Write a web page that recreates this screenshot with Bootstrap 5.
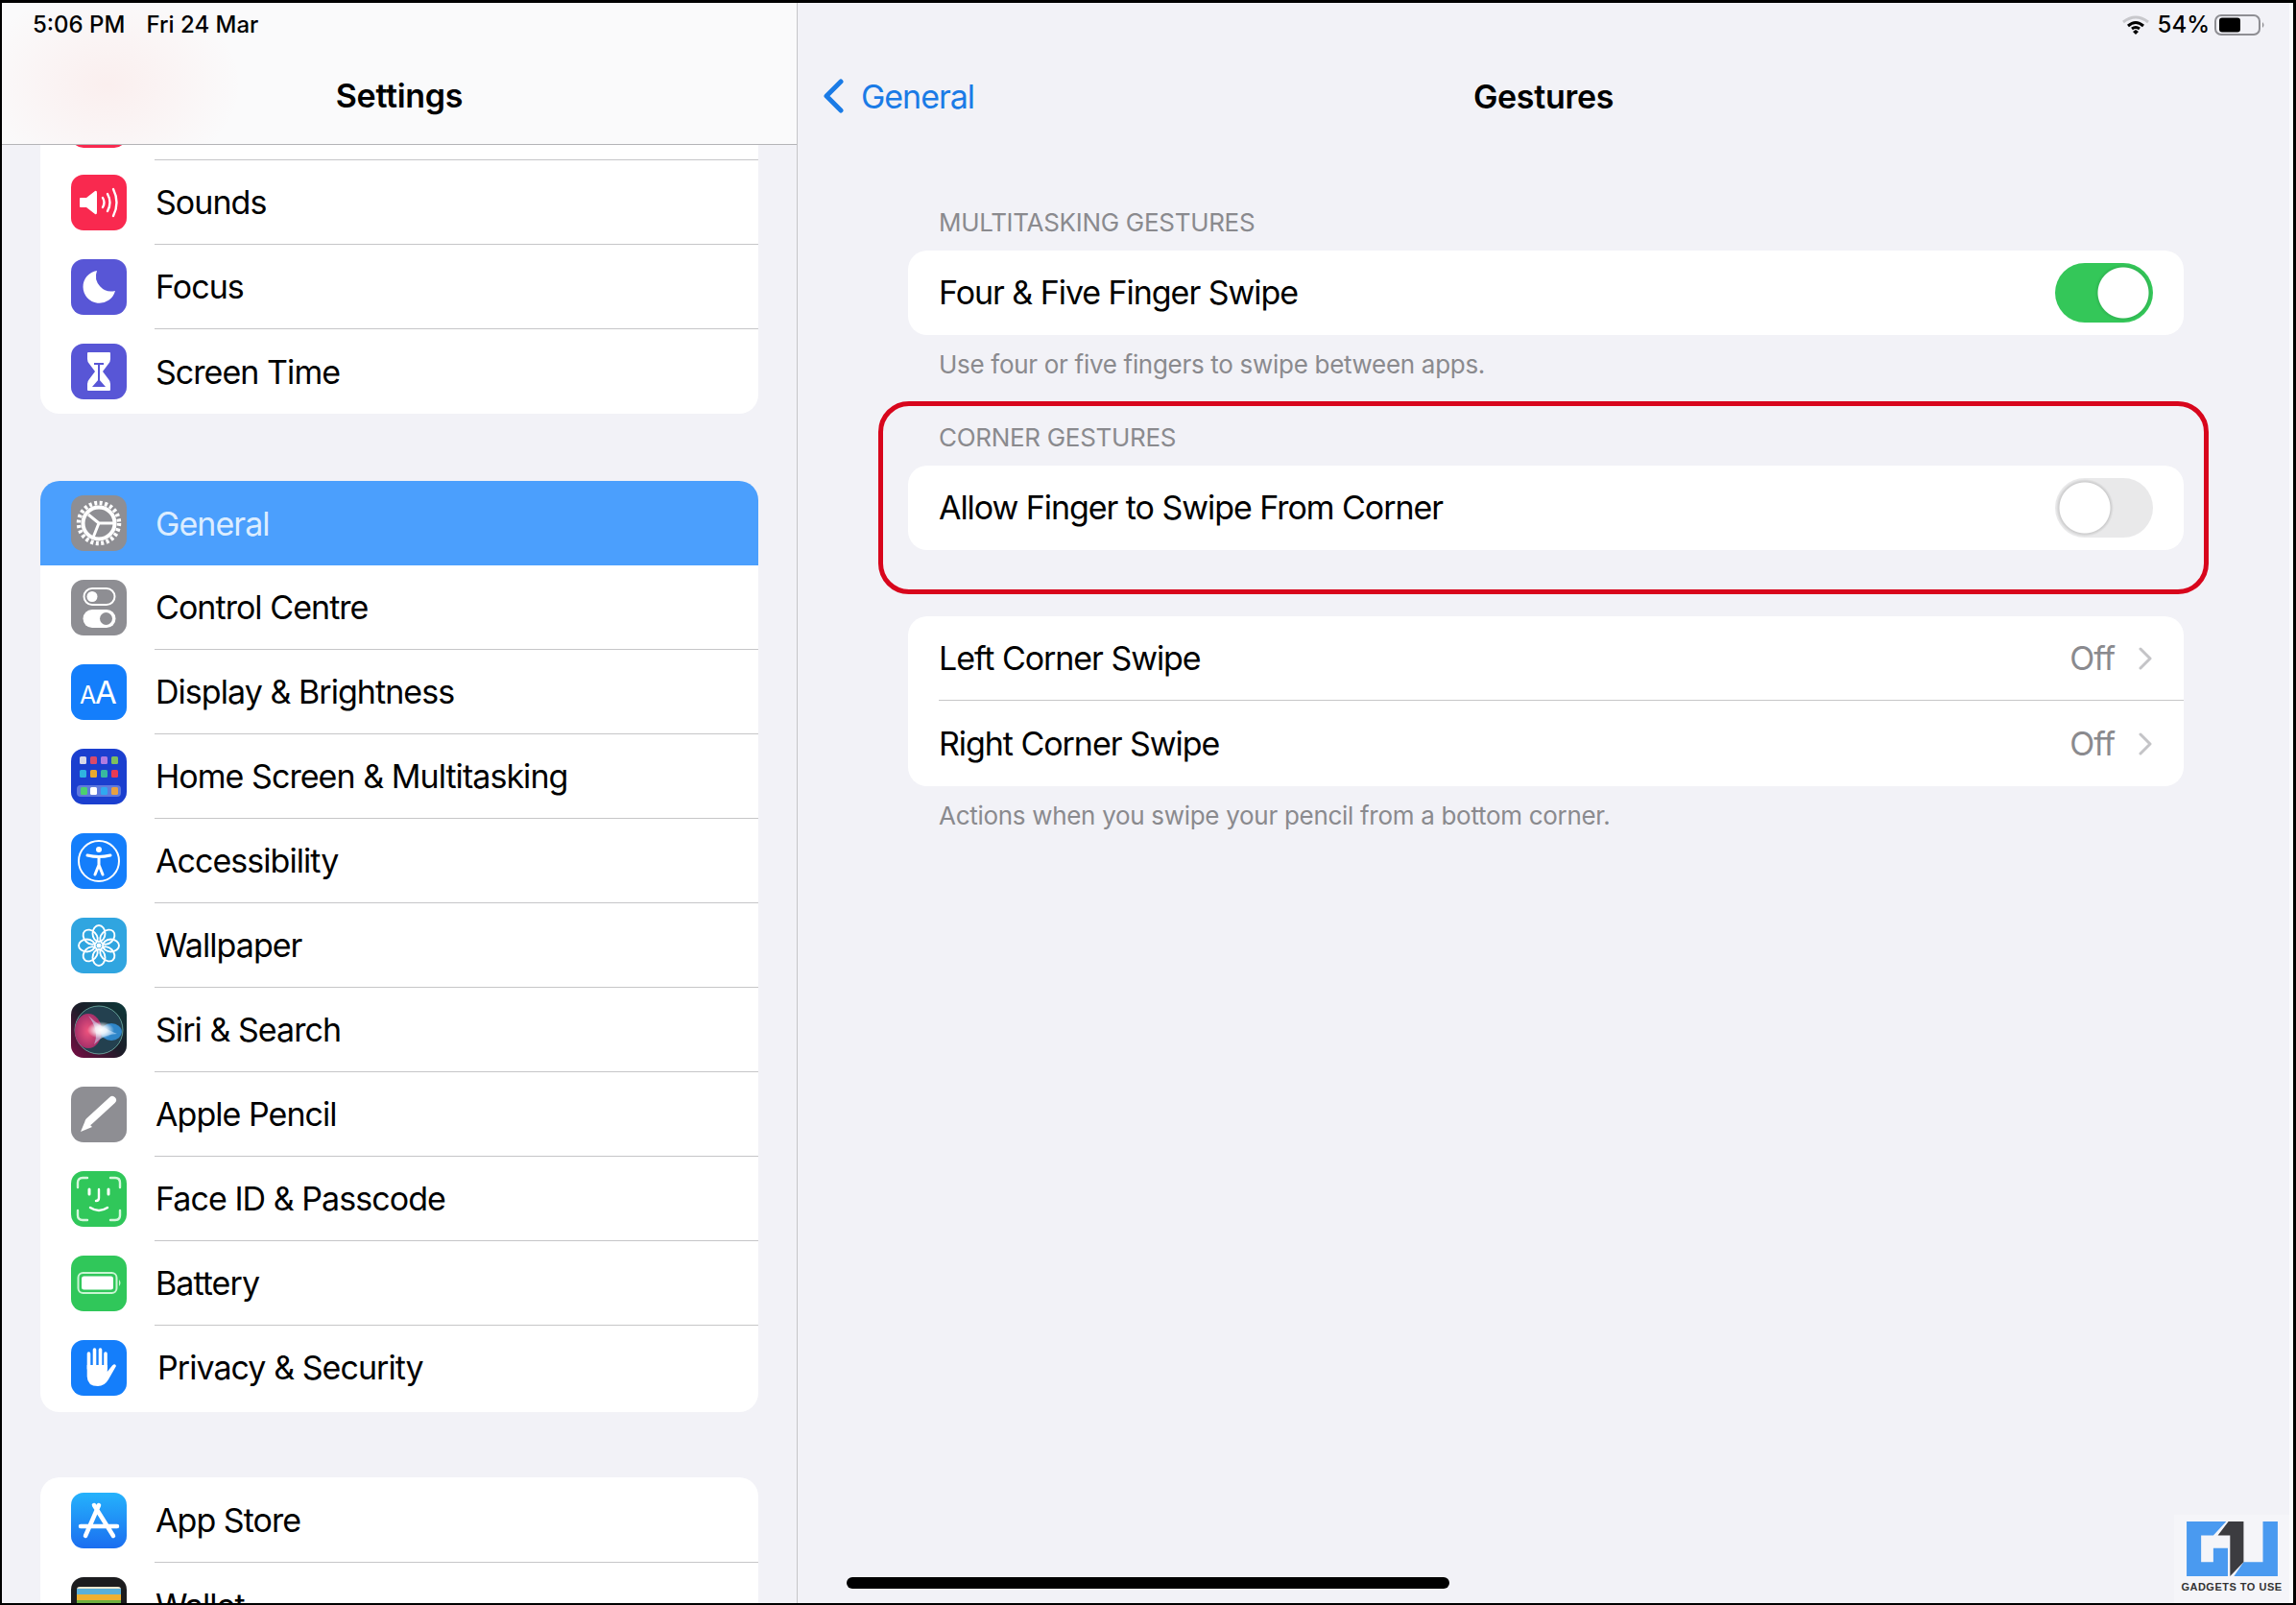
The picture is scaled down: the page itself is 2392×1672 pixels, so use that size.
<!DOCTYPE html>
<html lang="en">
<head>
<meta charset="utf-8">
<title>Gestures</title>
<link href="https://cdn.jsdelivr.net/npm/bootstrap@5.3.0/dist/css/bootstrap.min.css" rel="stylesheet">
<style>
html,body{margin:0;height:1672px;background:#000;overflow:hidden}
body{font-family:Inter,"Liberation Sans",sans-serif;color:#000}
.device{width:2392px;height:1672px;border-style:solid;border-color:#000;border-width:3px 3px 2px 2px;position:relative;overflow:hidden}
.side-pane{width:829px;flex:none;background:#f2f2f7;border-right:1px solid #c6c6c8}
.main-pane{flex:1 1 auto;min-width:0;background:#f2f2f7;border-right:4px solid #fbfbfd;position:relative}
.side-head{height:148px;flex:none;border-bottom:1px solid #b4b4b7;position:relative;z-index:2;
  background:radial-gradient(ellipse 140px 100px at 110px 85px,rgba(255,90,70,.07),rgba(255,90,70,0)),#fafafb}
.stat-row{height:46px;flex:none;font-size:24px;font-weight:500;letter-spacing:0}
.title-row{flex:1 1 auto;font-size:34px;font-weight:600;letter-spacing:-.3px}
.side-scroll{flex:1 1 auto;min-height:0;overflow:hidden;padding:0 40px}
.ios-group{--bs-list-group-border-radius:20px;--bs-list-group-bg:#fff;margin-bottom:70px}
.ios-group.first-up{margin-top:-72px}
.ios-item{padding:0 0 0 32px;border:0;height:88px;display:flex;align-items:center;font-size:34px;letter-spacing:-1.05px;color:#000;background:#fff}
.side-scroll .ios-item{letter-spacing:-.95px}
.ios-body{flex:1 1 auto;height:100%;display:flex;align-items:center;border-bottom:1px solid #c6c6c8;min-width:0}
.side-scroll .ios-body{padding-left:1px}
.ios-item:last-child .ios-body{border-bottom:0}
.ios-item.picked{background:#4b9ffd;color:#dcedff}
.ios-item.picked .ios-body{border-bottom:0}
.ios-item.tall-end{height:90px;padding-bottom:2px}
.ios-group.after-tall{margin-bottom:68px}
.ios-item.tall-row{height:89px}
.app-ic{width:58px;height:58px;border-radius:13px;flex:none;margin-right:29px;display:block}
.ic-peek{margin-top:4px}
.ic-red{background:#f9294f}.ic-indigo{background:#5856d6}.ic-gray{background:#8e8e93}.ic-blue{background:#147efb}
.ic-navy{background:#1b3fcf}.ic-sky{background:#30a5e0}.ic-green{background:#30c75a}.ic-dark{background:#1c1c1e}
.ic-store{background:linear-gradient(#25b2fc,#1b6ef0)}
.tx-shift{padding-left:2px}
.text-lift{margin-top:-2px}
.back-link{color:#1a7be6;font-size:34px;letter-spacing:-1.05px;text-decoration:none;padding-left:26px;gap:18px}
.nav-grid{display:grid;grid-template-columns:1fr auto 1fr;align-items:center;height:102px}
.pane-body{padding:65px 110px 0 115px;position:relative}
.sec-title{font-size:26px;line-height:32px;color:#8a8a8e;padding-left:32px;margin-bottom:13px;letter-spacing:-.3px}
.sec-note{font-size:26px;line-height:32px;color:#8a8a8e;padding-left:32px;margin-top:15px;letter-spacing:-.3px}
.gap-a{margin-top:44px}
.main-group{--bs-list-group-border-radius:20px;--bs-list-group-bg:#fff}
.gap-b{margin-top:69px}
.form-switch .form-check-input.ios-sw{width:102px;height:62px;margin:0 32px 0 0;border:0;border-radius:31px;
  background-color:#e9e9ea;background-size:100% 100%;background-position:0 0;box-shadow:none;
  background-image:radial-gradient(circle 30px at 31px 31px,#fff 26px,rgba(0,0,0,.12) 27px,rgba(0,0,0,0) 30px)}
.form-switch .form-check-input.ios-sw:checked{background-color:#34c759;
  background-image:radial-gradient(circle 30px at 71px 31px,#fff 26px,rgba(0,0,0,.08) 27px,rgba(0,0,0,0) 30px)}
.sw-wrap{padding:0;margin:0;min-height:0;display:flex}
.off-val{color:#8a8a8e;margin-right:25px}
.chev-ic{margin-right:33px;flex:none}
.red-frame{position:absolute;left:84px;top:267px;width:1386px;height:201px;border:5px solid #d8061c;border-radius:32px;pointer-events:none}
.home-bar{position:absolute;left:51px;bottom:15px;width:628px;height:12px;border-radius:6px;background:#000}
.gtu-mark{position:absolute;right:0;bottom:0;width:120px;height:92px;background:rgba(255,255,255,.25);display:flex;flex-direction:column;align-items:center;padding-top:7px}
.gtu-mark span{font:700 11px/12px "Liberation Sans",sans-serif;color:#333;letter-spacing:.5px;margin-top:5px;white-space:nowrap}
.stat-right{gap:5px;padding-right:25px}
</style>
</head>
<body>
<div class="device d-flex">
  <aside class="side-pane d-flex flex-column">
    <header class="side-head d-flex flex-column">
      <div class="stat-row d-flex align-items-center" style="padding-left:32px;gap:22px"><span>5:06 PM</span><span>Fri 24 Mar</span></div>
      <div class="title-row d-flex align-items-center justify-content-center">Settings</div>
    </header>
    <div class="side-scroll">
      <div class="list-group ios-group first-up">
        <div class="list-group-item ios-item"><svg class="app-ic ic-red ic-peek" viewBox="0 0 58 58"></svg><div class="ios-body"></div></div>
        <div class="list-group-item ios-item"><svg class="app-ic ic-red" viewBox="0 0 58 58"><path fill="#fff" d="M10 24h6l9-7q2-1 2 2v20q0 3-2 2l-9-7h-6q-1 0-1-1v-8q0-1 1-1z"/><path fill="none" stroke="#fff" stroke-width="2.4" stroke-linecap="round" d="M33 24q3 5 0 10M38 20q5 9 0 18M44 15q7 14 0 28"/></svg><div class="ios-body">Sounds</div></div>
        <div class="list-group-item ios-item"><svg class="app-ic ic-indigo" viewBox="0 0 58 58"><path fill="#fff" d="M27 12A17 17 0 1 0 46 33A16 16 0 0 1 27 12z"/></svg><div class="ios-body">Focus</div></div>
        <div class="list-group-item ios-item"><svg class="app-ic ic-indigo" viewBox="0 0 58 58"><path fill="#fff" d="M18 9h22q1 0 1 1v6q0 3-2 5l-6 8 6 8q2 2 2 5v6q0 1-1 1H18q-1 0-1-1v-6q0-3 2-5l6-8-6-8q-2-2-2-5v-6q0-1 1-1z"/><path fill="none" stroke="#5856d6" stroke-width="2" d="M24 21h10M29 21v18"/><path fill="#5856d6" d="M29 37l7 8H22z"/></svg><div class="ios-body">Screen Time</div></div>
      </div>
      <div class="list-group ios-group after-tall">
        <div class="list-group-item ios-item picked"><svg class="app-ic ic-gray" viewBox="0 0 58 58"><circle cx="29" cy="29" r="21" fill="none" stroke="#fff" stroke-width="4.5" stroke-dasharray="3 2.5"/><circle cx="29" cy="29" r="16.500" fill="none" stroke="#fff" stroke-width="4"/><path fill="none" stroke="#fff" stroke-width="3" d="M29 29L18 20M29 29H45M29 29L23 44"/></svg><div class="ios-body">General</div></div>
        <div class="list-group-item ios-item"><svg class="app-ic ic-gray" viewBox="0 0 58 58"><rect x="13.5" y="9" width="32" height="17" rx="8.5" fill="none" stroke="#fff" stroke-width="2"/><circle cx="22" cy="17.5" r="5.5" fill="#fff"/><rect x="12.500" y="31" width="34" height="19" rx="9.500" fill="#fff"/><circle cx="36.500" cy="40.500" r="6.500" fill="#8e8e93"/></svg><div class="ios-body">Control Centre</div></div>
        <div class="list-group-item ios-item"><svg class="app-ic ic-blue" viewBox="0 0 58 58"><text x="9" y="41" font-family="Inter,sans-serif" font-size="25" fill="#fff">A</text><text x="25" y="41" font-family="Inter,sans-serif" font-size="33" fill="#fff">A</text></svg><div class="ios-body">Display &amp; Brightness</div></div>
        <div class="list-group-item ios-item"><svg class="app-ic ic-navy" viewBox="0 0 58 58"><g><rect x="9" y="8" width="7" height="8" rx="1.500" fill="#d8d8e8"/><rect x="20" y="8" width="7" height="8" rx="1.500" fill="#d94a6a"/><rect x="31" y="8" width="7" height="8" rx="1.500" fill="#b07be0"/><rect x="42" y="8" width="7" height="8" rx="1.500" fill="#7dbf5e"/><rect x="9" y="22" width="7" height="8" rx="1.500" fill="#2fb4e0"/><rect x="20" y="22" width="7" height="8" rx="1.500" fill="#e8a830"/><rect x="31" y="22" width="7" height="8" rx="1.500" fill="#38b8a0"/><rect x="42" y="22" width="7" height="8" rx="1.500" fill="#e83a55"/><rect x="6" y="38" width="46" height="12" rx="4" fill="#fff" opacity=".3"/><rect x="10" y="40" width="7" height="8" rx="1.500" fill="#4cd070"/><rect x="20" y="40" width="7" height="8" rx="1.500" fill="#fff"/><rect x="31" y="40" width="7" height="8" rx="1.500" fill="#30a8f0"/><rect x="42" y="40" width="7" height="8" rx="1.500" fill="#e8a040"/></g></svg><div class="ios-body">Home Screen &amp; Multitasking</div></div>
        <div class="list-group-item ios-item"><svg class="app-ic ic-blue" viewBox="0 0 58 58"><circle cx="29" cy="29" r="21" fill="none" stroke="#fff" stroke-width="2"/><circle cx="29" cy="17" r="3" fill="#fff"/><path fill="none" stroke="#fff" stroke-width="3" stroke-linecap="round" stroke-linejoin="round" d="M17 23q12 3 24 0M29 25v8M29 33l-4 10M29 33l4 10"/></svg><div class="ios-body">Accessibility</div></div>
        <div class="list-group-item ios-item"><svg class="app-ic ic-sky" viewBox="0 0 58 58"><g fill="none" stroke="#fff" stroke-width="1.900"><ellipse cx="29" cy="16.500" rx="6.500" ry="8.500"/><ellipse cx="29" cy="16.500" rx="6.500" ry="8.500" transform="rotate(45 29 29)"/><ellipse cx="29" cy="16.500" rx="6.500" ry="8.500" transform="rotate(90 29 29)"/><ellipse cx="29" cy="16.500" rx="6.500" ry="8.500" transform="rotate(135 29 29)"/><ellipse cx="29" cy="16.500" rx="6.500" ry="8.500" transform="rotate(180 29 29)"/><ellipse cx="29" cy="16.500" rx="6.500" ry="8.500" transform="rotate(225 29 29)"/><ellipse cx="29" cy="16.500" rx="6.500" ry="8.500" transform="rotate(270 29 29)"/><ellipse cx="29" cy="16.500" rx="6.500" ry="8.500" transform="rotate(315 29 29)"/></g><circle cx="29" cy="29" r="2.500" fill="#fff"/></svg><div class="ios-body">Wallpaper</div></div>
        <div class="list-group-item ios-item"><svg class="app-ic" viewBox="0 0 58 58"><defs><linearGradient id="siriBg" x1="0" y1="1" x2="1" y2="0"><stop offset="0" stop-color="#7a0d45"/><stop offset=".5" stop-color="#1c1c28"/><stop offset="1" stop-color="#0d3a3a"/></linearGradient><radialGradient id="siriPink"><stop offset="0" stop-color="#f0547e"/><stop offset="1" stop-color="#a6306a"/></radialGradient><radialGradient id="siriStar"><stop offset="0" stop-color="#fff"/><stop offset=".45" stop-color="#fff" stop-opacity=".8"/><stop offset="1" stop-color="#fff" stop-opacity="0"/></radialGradient></defs><rect width="58" height="58" fill="url(#siriBg)"/><circle cx="29" cy="29" r="25" fill="#23404f"/><circle cx="29" cy="29" r="25" fill="none" stroke="#7fc8b8" stroke-opacity=".7"/><ellipse cx="18" cy="30" rx="14" ry="18" fill="url(#siriPink)"/><ellipse cx="42" cy="31" rx="11" ry="9" fill="#2f86c9"/><path d="M18 14Q30 26 48 33Q34 33 24 44Q30 30 18 14z" fill="#c9e4ff" opacity=".55"/><ellipse cx="31" cy="29" rx="14" ry="9" fill="url(#siriStar)"/></svg><div class="ios-body">Siri &amp; Search</div></div>
        <div class="list-group-item ios-item"><svg class="app-ic ic-gray" viewBox="0 0 58 58"><path stroke="#fff" stroke-width="8" stroke-linecap="round" d="M19 36L43 14"/><path fill="#fff" d="M15 35l7 7-12 5z"/></svg><div class="ios-body">Apple Pencil</div></div>
        <div class="list-group-item ios-item"><svg class="app-ic ic-green" viewBox="0 0 58 58"><path fill="none" stroke="#d5f7dc" stroke-width="2.400" stroke-linecap="round" d="M7 17v-5q0-5 5-5h5M41 7h5q5 0 5 5v5M51 41v5q0 5-5 5h-5M17 51h-5q-5 0-5-5v-5"/><path fill="none" stroke="#fff" stroke-width="3" stroke-linecap="round" d="M19 19v5M39 19v5"/><path fill="none" stroke="#fff" stroke-width="2.400" stroke-linecap="round" d="M29 19v9q0 3-3 3M20 38q9 6 18 0"/></svg><div class="ios-body">Face ID &amp; Passcode</div></div>
        <div class="list-group-item ios-item"><svg class="app-ic ic-green" viewBox="0 0 58 58"><rect x="7.500" y="18" width="40" height="21" rx="5" fill="none" stroke="#c8f5d2" stroke-width="2"/><rect x="11" y="21.500" width="33" height="14" rx="2.500" fill="#fff"/><path d="M50 25q3 3.500 0 7z" fill="#c8f5d2"/></svg><div class="ios-body">Battery</div></div>
        <div class="list-group-item ios-item tall-end"><svg class="app-ic ic-blue" viewBox="0 0 58 58"><path fill="none" stroke="#fff" stroke-width="3.600" stroke-linecap="round" d="M18.500 14v16M24.500 10v20M30.500 10v20M36 14v16"/><path fill="#fff" d="M16.700 26H37.800V33L43 26.500Q46 24 47 27L39 41Q35 48 28 48Q17 48 16.700 38z"/></svg><div class="ios-body"><span class="tx-shift text-lift">Privacy &amp; Security</span></div></div>
      </div>
      <div class="list-group ios-group">
        <div class="list-group-item ios-item tall-row"><svg class="app-ic ic-store" viewBox="0 0 58 58"><path fill="none" stroke="#fff" stroke-width="4.500" stroke-linecap="round" d="M29 13L15 45M24 13L44 45M10 35H48"/></svg><div class="ios-body">App Store</div></div>
        <div class="list-group-item ios-item"><svg class="app-ic ic-dark" viewBox="0 0 58 58"><rect x="6" y="10" width="46" height="8" rx="3" fill="#f3e8d0"/><rect x="6" y="12" width="46" height="6" fill="#5bb0d8"/><rect x="6" y="18" width="46" height="6" fill="#f0b030"/><rect x="6" y="24" width="46" height="8" fill="#70b040"/></svg><div class="ios-body">Wallet</div></div>
      </div>
    </div>
  </aside>
  <main class="main-pane d-flex flex-column">
    <div class="stat-row d-flex align-items-center justify-content-end stat-right">
      <svg width="28" height="20" viewBox="0 0 28 20"><path d="M1 7Q14-3 27 7" fill="none" stroke="#c8c8cc" stroke-width="3"/><path d="M6 11Q14 4 22 11M10 14Q14 11 18 14" fill="none" stroke="#000" stroke-width="3"/><path d="M11 17l3-2 3 2-3 3z" fill="#000"/></svg>
      <span style="margin-left:4px">54%</span>
      <svg width="53" height="22" viewBox="0 0 53 22"><rect x="1" y="1" width="46" height="20" rx="6" fill="none" stroke="#8e8e93" stroke-width="2"/><rect x="5" y="3.500" width="22" height="15" rx="3" fill="#000"/><path d="M50 8q3 3 0 6z" fill="#8e8e93"/></svg>
    </div>
    <nav class="nav-grid">
      <a href="#" class="back-link d-flex align-items-center"><svg width="22" height="36" viewBox="0 0 22 36"><path d="M19 3L4 18l15 15" fill="none" stroke="#1a7be6" stroke-width="5" stroke-linecap="round" stroke-linejoin="round"/></svg>General</a>
      <div class="title-row" style="flex:none">Gestures</div>
      <div></div>
    </nav>
    <div class="pane-body flex-grow-1">
      <div class="sec-title">MULTITASKING GESTURES</div>
      <div class="list-group main-group">
        <div class="list-group-item ios-item"><div class="ios-body justify-content-between"><span class="text-lift">Four &amp; Five Finger Swipe</span><div class="form-check form-switch sw-wrap"><input class="form-check-input ios-sw" type="checkbox" role="switch" checked aria-label="Four and Five Finger Swipe"></div></div></div>
      </div>
      <div class="sec-note">Use four or five fingers to swipe between apps.</div>
      <div class="sec-title gap-a">CORNER GESTURES</div>
      <div class="list-group main-group">
        <div class="list-group-item ios-item"><div class="ios-body justify-content-between"><span class="text-lift">Allow Finger to Swipe From Corner</span><div class="form-check form-switch sw-wrap"><input class="form-check-input ios-sw" type="checkbox" role="switch" aria-label="Allow Finger to Swipe From Corner"></div></div></div>
      </div>
      <div class="list-group main-group gap-b">
        <div class="list-group-item ios-item"><div class="ios-body"><span class="flex-grow-1">Left Corner Swipe</span><span class="off-val">Off</span><svg class="chev-ic" width="14" height="24" viewBox="0 0 14 24"><path d="M2 2l10 10L2 22" fill="none" stroke="#c4c4c7" stroke-width="3" stroke-linecap="round" stroke-linejoin="round"/></svg></div></div>
        <div class="list-group-item ios-item tall-row"><div class="ios-body"><span class="flex-grow-1">Right Corner Swipe</span><span class="off-val">Off</span><svg class="chev-ic" width="14" height="24" viewBox="0 0 14 24"><path d="M2 2l10 10L2 22" fill="none" stroke="#c4c4c7" stroke-width="3" stroke-linecap="round" stroke-linejoin="round"/></svg></div></div>
      </div>
      <div class="sec-note">Actions when you swipe your pencil from a bottom corner.</div>
      <div class="red-frame"></div>
    </div>
    <div class="home-bar"></div>
    <div class="gtu-mark">
      <svg width="95" height="57" viewBox="115 62 283 170"><path fill="#4a9af0" d="M115 62H238L198 105H160V188H198V145H243V232H115zM352 62H398V232H262L292 188H352z"/><path fill="#3c3c40" d="M245 62H292V188L250 232V105H212z"/></svg>
      <span>GADGETS TO USE</span>
    </div>
  </main>
</div>
<script src="https://cdn.jsdelivr.net/npm/bootstrap@5.3.0/dist/js/bootstrap.bundle.min.js"></script>
</body>
</html>
